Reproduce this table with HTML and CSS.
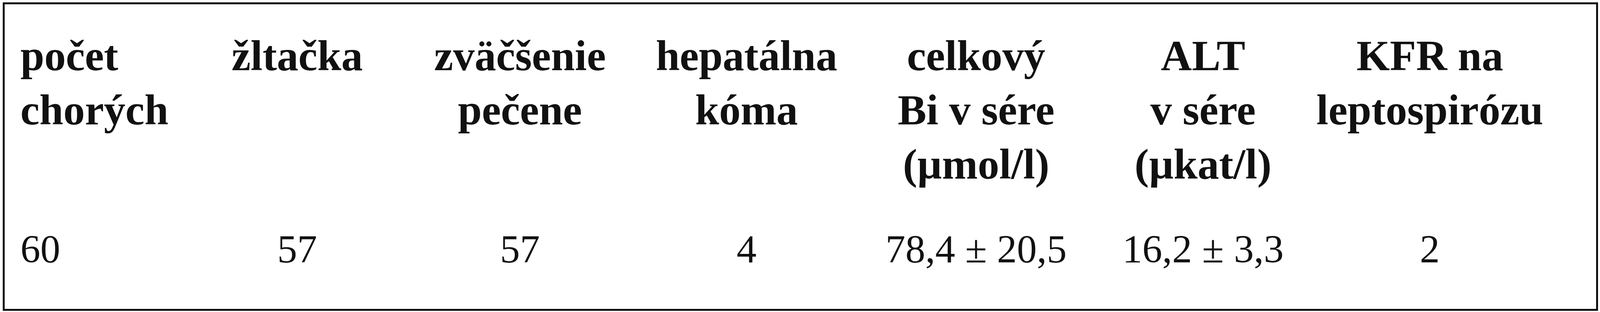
FILE: index.html
```html
<!DOCTYPE html>
<html lang="sk">
<head>
<meta charset="utf-8">
<title>Tabuľka</title>
<link rel="stylesheet" href="styles.css">
</head>
<body>
<div class="frame">
  <table class="tbl">
    <colgroup>
      <col class="c1"><col class="c2"><col class="c3"><col class="c4"><col class="c5"><col class="c6"><col class="c7">
    </colgroup>
    <thead>
      <tr>
        <th class="first">počet<br>chorých</th>
        <th>žltačka</th>
        <th>zväčšenie<br>pečene</th>
        <th>hepatálna<br>kóma</th>
        <th>celkový<br>Bi v sére<br>(µmol/l)</th>
        <th>ALT<br>v sére<br>(µkat/l)</th>
        <th>KFR na<br>leptospirózu</th>
      </tr>
    </thead>
    <tbody>
      <tr>
        <td class="first">60</td>
        <td>57</td>
        <td>57</td>
        <td>4</td>
        <td>78,4 ± 20,5</td>
        <td>16,2 ± 3,3</td>
        <td>2</td>
      </tr>
    </tbody>
  </table>
</div>
</body>
</html>
```

FILE: styles.css
```css
html, body {
  margin: 0;
  padding: 0;
  background: #ffffff;
}

body {
  font-family: "Liberation Serif", "Times New Roman", serif;
  color: #111111;
}

.frame {
  box-sizing: border-box;
  margin: 6px 0 0 0.165vw;
  width: 99.72vw;
  height: 791px;
  border: 5px solid #111111;
  padding-top: 63px;
}

.tbl {
  border-collapse: collapse;
  border-spacing: 0;
  table-layout: fixed;
  width: 96.73%;
}

.c1 { width: 11.78%; }
.c2 { width: 14.45%; }
.c3 { width: 14.49%; }
.c4 { width: 14.95%; }
.c5 { width: 14.87%; }
.c6 { width: 14.61%; }
.c7 { width: 14.85%; }

.tbl th,
.tbl td {
  padding: 0;
  text-align: center;
  vertical-align: top;
  line-height: 139px;
  white-space: nowrap;
}

.tbl th {
  font-size: 110px;
  font-weight: bold;
  height: 417px;
}

.tbl td {
  font-size: 102px;
  font-weight: normal;
  padding-top: 78px;
}

.tbl .first {
  text-align: left;
  padding-left: 0.99vw;
}
```
